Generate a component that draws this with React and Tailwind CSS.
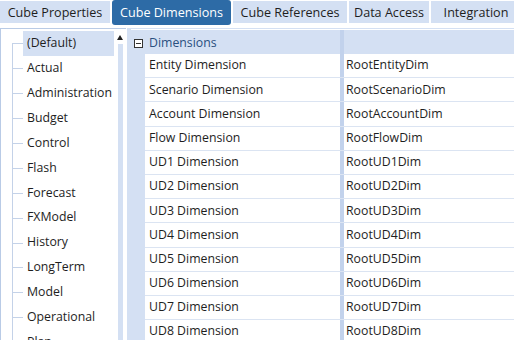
export default function App() {
  const tabs = [
    { label: "Cube Properties", w: 110 },
    { label: "Cube Dimensions", w: 119, active: true },
    { label: "Cube References", w: 114 },
    { label: "Data Access", w: 80 },
    { label: "Integration", w: 90 },
  ];
  const tree = [
    "(Default)", "Actual", "Administration", "Budget", "Control", "Flash", "Forecast",
    "FXModel", "History", "LongTerm", "Model", "Operational", "Plan",
  ];
  const rows = [
    ["Entity Dimension", "RootEntityDim"],
    ["Scenario Dimension", "RootScenarioDim"],
    ["Account Dimension", "RootAccountDim"],
    ["Flow Dimension", "RootFlowDim"],
    ["UD1 Dimension", "RootUD1Dim"],
    ["UD2 Dimension", "RootUD2Dim"],
    ["UD3 Dimension", "RootUD3Dim"],
    ["UD4 Dimension", "RootUD4Dim"],
    ["UD5 Dimension", "RootUD5Dim"],
    ["UD6 Dimension", "RootUD6Dim"],
    ["UD7 Dimension", "RootUD7Dim"],
    ["UD8 Dimension", "RootUD8Dim"],
  ];
  return (
    <div
      className="w-[514px] h-[340px] overflow-hidden bg-white text-[12.3px] text-[#1e1e1e]"
      style={{ fontFamily: '"Open Sans", "Noto Sans", sans-serif' }}
    >
      {/* tab bar */}
      <div className="flex h-[26px] items-start gap-[2px] text-[12.6px]">
        {tabs.map((t) =>
          t.active ? (
            <div
              key={t.label}
              className="flex h-[25px] shrink-0 items-center justify-center rounded-[3px] bg-[#2d6ba6] pt-[1px] text-white"
              style={{ width: t.w }}
            >
              {t.label}
            </div>
          ) : (
            <div
              key={t.label}
              className="mt-[1px] flex h-[22px] shrink-0 items-center justify-center bg-[#d4e0f3] pt-[2px]"
              style={{ width: t.w }}
            >
              {t.label}
            </div>
          )
        )}
      </div>
      <div className="mt-[2px] flex h-[312px] overflow-hidden">
        {/* left tree */}
        <div className="flex w-[126px] shrink-0 border-l border-t border-[#b9cbe6]">
          <div className="relative w-[114px] pt-[2px]">
            <div className="absolute left-[11px] top-[14px] h-[320px] w-px bg-[#c4d2e8]" />
            {tree.map((name, i) => (
              <div key={name} className="relative flex h-[24.9px] shrink-0 items-center">
                <div className="absolute left-[11px] top-1/2 h-px w-[11px] bg-[#c4d2e8]" />
                <div
                  className={
                    "ml-[22px] flex h-full items-center pl-[4px] " +
                    (i === 0 ? "w-[91px] bg-[#d4e0f3]" : "")
                  }
                >
                  {name}
                </div>
              </div>
            ))}
          </div>
          <div className="flex w-[12px] flex-col items-center">
            <div className="mt-[6px] h-0 w-0 border-x-[3px] border-b-[5px] border-x-transparent border-b-[#222]" />
            <div className="mt-[4px] w-[5px] flex-1 bg-[#d4e0f3]" />
          </div>
        </div>
        {/* right grid */}
        <div className="ml-[1px] flex min-h-0 flex-1 flex-col overflow-hidden border-l-[4px] border-t border-[#d4e0f3] pt-[1px]">
          <div className="flex h-[24px] shrink-0 items-stretch bg-[#d4e0f3]">
            <div className="flex w-[209px] shrink-0 items-center pt-[2px]">
              <div className="ml-[3px] flex h-[9px] w-[9px] items-center justify-center border border-[#333] bg-white">
                <div className="h-px w-[5px] bg-[#333]" />
              </div>
              <span className="ml-[6px] text-[#2a4f7f]">Dimensions</span>
            </div>
            <div className="w-[4px] shrink-0 bg-[#c2d2ec]" />
          </div>
          <div className="flex min-h-0 flex-1">
            <div className="w-[14px] shrink-0 bg-[#d4e0f3]" />
            <div className="flex flex-1 flex-col">
              {rows.map(([k, v]) => (
                <div key={k} className="flex h-[24.2px] shrink-0 border-b border-[#dbe4f2]">
                  <div className="flex w-[195px] shrink-0 items-center pl-[4px]">{k}</div>
                  <div className="w-[4px] shrink-0 bg-[#c2d2ec]" />
                  <div className="flex flex-1 items-center pl-[2px]">{v}</div>
                </div>
              ))}
            </div>
          </div>
        </div>
      </div>
    </div>
  );
}
